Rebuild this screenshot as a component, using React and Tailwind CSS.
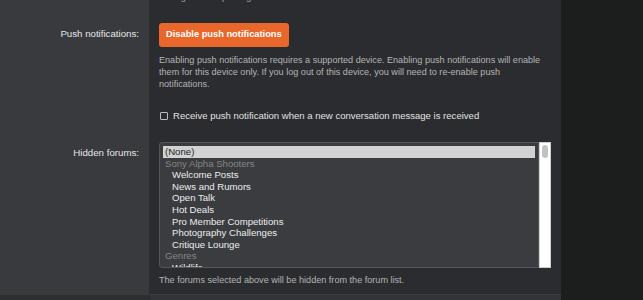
import React from "react";

const groups = [
  { type: "opt", label: "(None)", selected: true },
  { type: "group", label: "Sony Alpha Shooters" },
  { type: "opt", label: "Welcome Posts", indent: true },
  { type: "opt", label: "News and Rumors", indent: true },
  { type: "opt", label: "Open Talk", indent: true },
  { type: "opt", label: "Hot Deals", indent: true },
  { type: "opt", label: "Pro Member Competitions", indent: true },
  { type: "opt", label: "Photography Challenges", indent: true },
  { type: "opt", label: "Critique Lounge", indent: true },
  { type: "group", label: "Genres" },
  { type: "opt", label: "Wildlife", indent: true },
];

const Label = ({ children, className = "" }) => (
  <div className={"bg-[#393a3d] border-r border-[#2a2b2d] text-right pr-[10px] text-[9.7px] text-[#e6e6e6] " + className}>
    {children}
  </div>
);

const App = () => {
  return (
    <div className="flex w-[643px] h-[300px] overflow-hidden bg-[#1c1d1d]" style={{ fontFamily: "'Liberation Sans', Arial, sans-serif" }}>
      <div className="w-[561px] flex flex-col">
        <div className="grid grid-cols-[150px_1fr] grid-rows-[10px_auto_1fr] h-[294px]">
          {/* partial row from above */}
          <Label />
          <div className="bg-[#2b2c2f] overflow-hidden pl-[16px]">
            <div className="-mt-[9px] text-[9.1px] leading-[12px] text-[#a9a9a9]">
              images when posting in the forums.
            </div>
          </div>

          {/* push notifications */}
          <Label className="pt-[16px] leading-[16px]">Push notifications:</Label>
          <div className="bg-[#2b2c2f] pl-[9px] pt-[13px] pr-[12px]">
            <div className="flex">
              <button className="h-[24px] px-[7px] rounded-[3px] bg-[#e9672b] text-white text-[9.3px] font-bold">
                Disable push notifications
              </button>
            </div>
            <p className="mt-[7px] text-[9.1px] leading-[12px] text-[#b4b4b4]">
              Enabling push notifications requires a supported device. Enabling push notifications will enable them for this device only. If you log out of this device, you will need to re-enable push notifications.
            </p>
            <label className="flex items-center mt-[19px] h-[14px] whitespace-nowrap text-[9.55px] text-[#e2e2e2]">
              <span className="w-[8px] h-[8px] border border-[#bdbdbd] rounded-[1px] ml-[1px] mr-[5px]" />
              Receive push notification when a new conversation message is received
            </label>
          </div>

          {/* hidden forums */}
          <Label className="pt-[22px] leading-[16px]">Hidden forums:</Label>
          <div className="bg-[#2b2c2f] pl-[9px] pt-[19px] pr-[10px]">
            <div className="flex h-[126px]">
              <div className="flex-1 border border-[#55565a] rounded-l-[3px] bg-[#3b3c3f] pt-[3px] px-[3px] overflow-hidden">
                {groups.map((g, i) =>
                  g.type === "group" ? (
                    <div key={i} className="h-[11.6px] leading-[11.6px] pl-[2px] text-[9.6px] text-[#858585]">
                      {g.label}
                    </div>
                  ) : (
                    <div
                      key={i}
                      className={
                        "h-[11.6px] leading-[11.6px] text-[9.6px] " +
                        (g.selected ? "bg-[#d2d2d2] text-[#222] pl-[2px]" : "text-[#ececec]") +
                        (g.indent ? " pl-[9px]" : "")
                      }
                    >
                      {g.label}
                    </div>
                  )
                )}
              </div>
              <div className="w-[12px] bg-white border border-[#cfcfcf] pt-[2px] px-[2px]">
                <div className="h-[13px] rounded-full bg-[#c2c2c2]" />
              </div>
            </div>
            <p className="mt-[5px] text-[9.1px] leading-[14px] text-[#b4b4b4]">
              The forums selected above will be hidden from the forum list.
            </p>
          </div>
        </div>
        <div className="grid grid-cols-[150px_1fr] h-[6px] border-t border-[#3a3b3e]">
          <div className="bg-[#2d2e30]" />
          <div className="bg-[#333437]" />
        </div>
      </div>
      <div className="flex-1 bg-[#1c1d1d]" />
    </div>
  );
};

export default App;
